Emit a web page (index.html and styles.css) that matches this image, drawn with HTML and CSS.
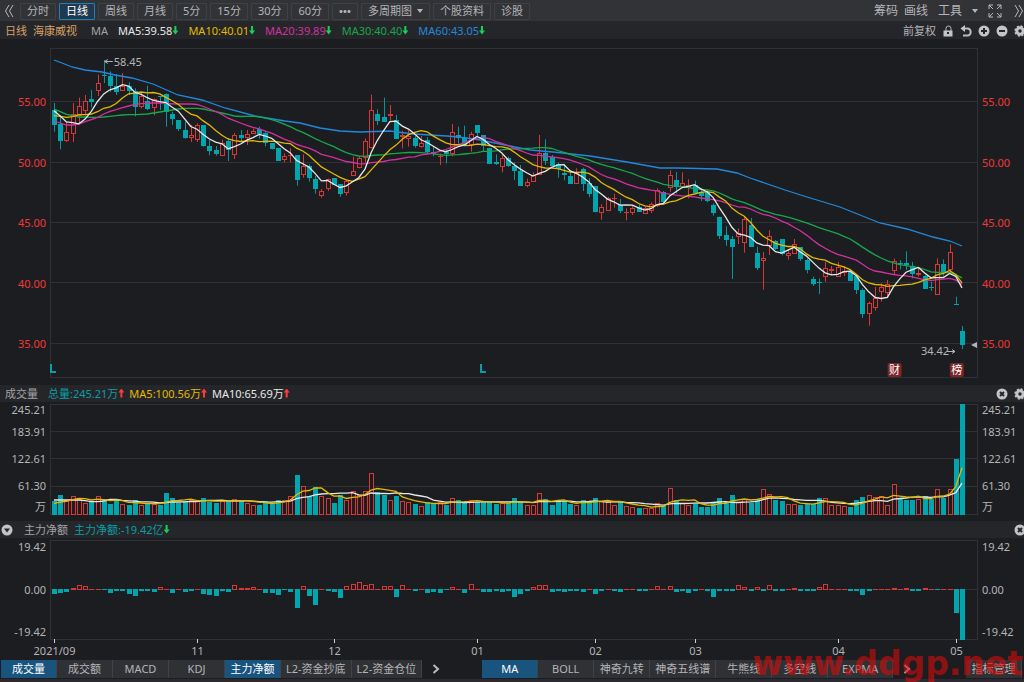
FILE: index.html
```html
<!DOCTYPE html>
<html lang="zh-CN">

<head>
    <meta charset="UTF-8">
    <meta name="viewport" content="width=device-width, initial-scale=1.0">
    <title>海康威视 日线</title>
    <link rel="stylesheet" href="styles.css">
</head>

<body>
    <div class="terminal">
        <header class="toolbar">
            <button class="plain" aria-label="收起">
                <svg width="10" height="14" viewBox="0 0 10 14"><path d="M5 1 1.500 7 5 13M9 1 5.500 7 9 13" /></svg>
            </button>
            <nav class="periods">
                <button>分时</button>
                <button class="active">日线</button>
                <button>周线</button>
                <button>月线</button>
                <button>5分</button>
                <button>15分</button>
                <button>30分</button>
                <button>60分</button>
                <button aria-label="更多周期"><i class="dots"></i></button>
                <button>多周期图<i class="caret"></i></button>
                <button>个股资料</button>
                <button>诊股</button>
            </nav>
            <div class="tools">
                <button class="plain">筹码</button>
                <button class="plain">画线</button>
                <button class="plain menu">工具<i class="caret"></i></button>
                <button class="plain full" aria-label="全屏">
                    <svg width="14" height="14" viewBox="0 0 14 14"><path d="M1 5V1H5M1 1 5 5M9 1H13V5M13 1 9 5M1 9V13H5M1 13 5 9M13 9V13H9M13 13 9 9" /></svg>
                </button>
                <button class="plain" aria-label="展开">
                    <svg width="10" height="14" viewBox="0 0 10 14"><path d="M1 1 4.500 7 1 13M5 1 8.500 7 5 13" /></svg>
                </button>
            </div>
        </header>

        <div class="bar info">
            <span class="stock">日线</span>
            <span class="stock name">海康威视</span>
            <span class="label">MA</span>
            <span class="white">MA5:39.58<i class="down"></i></span>
            <span class="yellow">MA10:40.01<i class="down"></i></span>
            <span class="pink">MA20:39.89<i class="down"></i></span>
            <span class="green">MA30:40.40<i class="down"></i></span>
            <span class="blue">MA60:43.05<i class="down"></i></span>
            <div class="bar-icons">
                <button class="plain">前复权</button>
                <button class="plain" aria-label="锁定">
                    <svg width="12" height="12" viewBox="0 0 12 12"><path d="M4 6V3.500a2.500 2.500 0 0 1 5 0V6" /><path class="solid" d="M1.500 5.500h9v6h-9z" /><path class="cut" d="M5 8h2" /></svg>
                </button>
                <button class="plain" aria-label="撤销">
                    <svg width="12" height="12" viewBox="0 0 12 12"><path class="thick" d="M2 3.500H7.500a3.200 3.500 0 0 1 0 7H3" /><path class="solid" d="M5 0V7L.5 3.500z" /></svg>
                </button>
                <button class="plain" aria-label="放大">
                    <svg width="12" height="12" viewBox="0 0 12 12"><circle class="solid" cx="6" cy="6" r="5.500" /><path class="cut" d="M3 6h6M6 3v6" /></svg>
                </button>
                <button class="plain" aria-label="缩小">
                    <svg width="12" height="12" viewBox="0 0 12 12"><circle class="solid" cx="6" cy="6" r="5.500" /><path class="cut" d="M3 6h6" /></svg>
                </button>
                <button class="plain" aria-label="设置">
                    <svg width="12" height="12" viewBox="0 0 12 12"><circle class="teeth" cx="6" cy="6" r="4.700" /><circle class="ring" cx="6" cy="6" r="3.200" /></svg>
                </button>
            </div>
        </div>

        <section class="panel price">
            <ul class="scale left">
                <li>55.00</li>
                <li>50.00</li>
                <li>45.00</li>
                <li>40.00</li>
                <li>35.00</li>
            </ul>
            <svg id="price" role="img" aria-label="K线图"></svg>
            <ul class="scale">
                <li>55.00</li>
                <li>50.00</li>
                <li>45.00</li>
                <li>40.00</li>
                <li>35.00</li>
            </ul>
        </section>

        <div class="bar volume-bar">
            <span class="label">成交量</span>
            <span class="teal">总量:245.21万<i class="up"></i></span>
            <span class="yellow">MA5:100.56万<i class="up"></i></span>
            <span class="white">MA10:65.69万<i class="up"></i></span>
            <div class="bar-icons">
                <button class="plain" aria-label="关闭成交量">
                    <svg width="12" height="12" viewBox="0 0 12 12"><circle class="solid" cx="6" cy="6" r="5.500" /><path class="cut" d="M4 4l4 4M8 4l-4 4" /></svg>
                </button>
                <button class="plain" aria-label="设置成交量">
                    <svg width="12" height="12" viewBox="0 0 12 12"><circle class="teeth" cx="6" cy="6" r="4.700" /><circle class="ring" cx="6" cy="6" r="3.200" /></svg>
                </button>
            </div>
        </div>

        <section class="panel volume">
            <ul class="scale left">
                <li>245.21</li>
                <li>183.91</li>
                <li>122.61</li>
                <li>61.30</li>
                <li>万</li>
            </ul>
            <svg id="volume" role="img" aria-label="成交量"></svg>
            <ul class="scale">
                <li>245.21</li>
                <li>183.91</li>
                <li>122.61</li>
                <li>61.30</li>
                <li>万</li>
            </ul>
        </section>

        <div class="bar flow-bar">
            <button class="plain" aria-label="切换指标">
                <svg width="12" height="12" viewBox="0 0 12 12"><circle class="solid" cx="6" cy="6" r="5.500" /><path class="hole" d="M3 4.500h6L6 8.500z" /></svg>
            </button>
            <span class="label">主力净额</span>
            <span class="teal">主力净额:-19.42亿<i class="down"></i></span>
            <div class="bar-icons">
                <button class="plain" aria-label="关闭主力净额">
                    <svg width="12" height="12" viewBox="0 0 12 12"><circle class="solid" cx="6" cy="6" r="5.500" /><path class="cut" d="M4 4l4 4M8 4l-4 4" /></svg>
                </button>
            </div>
        </div>

        <section class="panel flow">
            <ul class="scale left">
                <li>19.42</li>
                <li>0.00</li>
                <li>-19.42</li>
            </ul>
            <svg id="flow" role="img" aria-label="主力净额"></svg>
            <ul class="scale">
                <li>19.42</li>
                <li>0.00</li>
                <li>-19.42</li>
            </ul>
        </section>

        <footer class="tabs">
            <div class="group">
                <button class="active">成交量</button>
                <button>成交额</button>
                <button>MACD</button>
                <button>KDJ</button>
                <button class="active">主力净额</button>
                <button class="wide">L2-资金抄底</button>
                <button class="wide">L2-资金仓位</button>
            </div>
            <button class="plain more" aria-label="更多副图指标">
                <svg width="8" height="10" viewBox="0 0 8 10"><path class="thick" d="M1.500 1 6 5 1.500 9" /></svg>
            </button>
            <div class="group main">
                <button class="active">MA</button>
                <button>BOLL</button>
                <button>神奇九转</button>
                <button>神奇五线谱</button>
                <button>牛熊线</button>
                <button>多空线</button>
                <button class="expma">EXPMA</button>
            </div>
            <button class="plain more" aria-label="更多主图指标">
                <svg width="8" height="10" viewBox="0 0 8 10"><path class="thick" d="M1.500 1 6 5 1.500 9" /></svg>
            </button>
            <div class="group manage">
                <button>指标管理</button>
            </div>
        </footer>
        <div class="watermark">www.ddgp.net</div>
    </div>
    <script src="chart.js"></script>
</body>

</html>
```
FILE: styles.css
```css
* {
    box-sizing: border-box;
}

body {
    margin: 0;
    background: #1c1d20;
    color: #b4b5b8;
    font-family: "Noto Sans", "Noto Sans CJK SC", sans-serif;
    font-size: 11px;
    line-height: 16px;
}

button {
    font: inherit;
    color: inherit;
    padding: 0;
    border: 0;
    background: none;
    white-space: nowrap;
}

ul {
    list-style: none;
    margin: 0;
    padding: 0;
}

.terminal {
    position: relative;
    overflow: hidden;
}

.terminal::after {
    content: '';
    display: block;
    height: 4px;
    background: #2c2a30;
    border-top: 1px solid #1c1d20;
}

/* icons */
button svg {
    display: block;
    fill: none;
    stroke: #b9babd;
    stroke-width: 1;
}

button svg .solid {
    fill: #c3c4c7;
    stroke: none;
}

button svg .thick {
    stroke-width: 2;
}

button svg .cut {
    stroke: #25262a;
    stroke-width: 2;
}

button svg .hole {
    fill: #25262a;
    stroke: none;
}

button svg .ring {
    stroke: #c3c4c7;
    stroke-width: 3;
}

button svg .teeth {
    stroke: #c3c4c7;
    stroke-width: 2;
    stroke-dasharray: 2 1.690;
}

.caret {
    display: inline-block;
    border: 3px solid transparent;
    border-top: 4px solid #b4b5b8;
    border-bottom: 0;
    margin-left: 5px;
    vertical-align: 2px;
}

.dots {
    display: block;
    width: 12px;
    height: 3px;
    background: radial-gradient(circle at 50% 50%, #b4b5b8 1px, transparent 2px) 0 0 / 4px 3px;
}

/* top toolbar */
.toolbar {
    display: flex;
    align-items: center;
    height: 22px;
    padding: 1px 0 0 4px;
    background: #323337;
    border-bottom: 1px solid #27282b;
}

.periods {
    display: flex;
    gap: 3px;
    margin-left: 6px;
}

.periods button {
    display: flex;
    align-items: center;
    height: 17px;
    padding: 0 6px;
    border: 1px solid #404145;
    border-radius: 1px;
}

.periods .active {
    color: #fff;
    background: #1f3a50;
    border-color: #2280b8;
}

.tools {
    display: flex;
    align-items: center;
    gap: 6px;
    margin-left: auto;
    font-size: 12px;
}

.menu {
    margin-left: 4px;
}

.menu .caret {
    margin-left: 10px;
}

.full {
    margin: 0 6px 0 4px;
}

/* indicator bars */
.bar {
    display: flex;
    align-items: center;
    height: 17px;
    padding-left: 5px;
    background: #25262a;
    white-space: nowrap;
}

.info span {
    margin-right: 10px;
}

.info .stock {
    color: #d9a066;
    margin-right: 6px;
}

.info .name {
    margin-right: 14px;
}

.label {
    color: #a3a4a7;
}

.white {
    color: #e8e8e8;
}

.yellow {
    color: #e3ba00;
}

.pink {
    color: #d3309f;
}

.green {
    color: #17a84c;
}

.blue {
    color: #2189dd;
}

.teal {
    color: #0a9ea5;
}

.bar-icons {
    display: flex;
    align-items: center;
    gap: 6px;
    margin-left: auto;
    margin-right: -2px;
}

.up,
.down {
    display: inline-block;
    width: 6px;
    height: 9px;
    background: #19cf5b;
    clip-path: polygon(2px 0, 4px 0, 4px 5px, 6px 5px, 3px 9px, 0 5px, 2px 5px);
}

.up {
    background: #ff3a3a;
    clip-path: polygon(2px 9px, 4px 9px, 4px 4px, 6px 4px, 3px 0, 0 4px, 2px 4px);
}

.volume-bar span {
    margin-right: 5px;
}

.volume-bar .label {
    margin-right: 10px;
}

.flow-bar {
    gap: 6px;
    padding-left: 1px;
}

.flow-bar .label {
    margin-left: 5px;
}

/* charts */
.panel {
    display: grid;
    grid-template-columns: 50px minmax(0, 1fr) 46px;
    grid-template-rows: 100%;
}

.panel svg {
    display: block;
    width: 100%;
    height: 100%;
    overflow: visible;
}

.scale {
    padding-left: 4px;
}

.scale.left {
    text-align: right;
    padding-left: 0;
    padding-right: 4px;
}

.price {
    height: 346px;
    color: #f03838;
}

.price .scale {
    display: flex;
    flex-direction: column;
    justify-content: space-between;
    padding-top: 55px;
    padding-bottom: 33px;
}

.volume {
    height: 119px;
}

.volume .scale {
    line-height: 27px;
}

.volume .scale li:first-child,
.volume .scale li:last-child {
    line-height: 16px;
}

.flow {
    height: 121px;
}

.flow .scale {
    display: flex;
    flex-direction: column;
    justify-content: space-between;
    padding-top: 1px;
    padding-bottom: 19px;
}

.frame,
.grid {
    fill: none;
    stroke: #303134;
    shape-rendering: crispEdges;
}

.rise {
    fill: #1c1d20;
    stroke: #d93636;
    shape-rendering: crispEdges;
}

.fall {
    fill: #00a5ad;
    stroke: none;
    shape-rendering: crispEdges;
}

.wick-rise {
    stroke: #d93636;
}

.wick-fall {
    stroke: #08949b;
}

.event {
    fill: none;
    stroke: #08a0a8;
    stroke-width: 2;
}

.ma {
    fill: none;
    stroke-width: 1.300;
    stroke: currentColor;
}

.note {
    fill: #b4b5b8;
}

.arrow {
    fill: none;
    stroke: #b4b5b8;
}

.tick {
    stroke: #d0d0d0;
    shape-rendering: crispEdges;
}

.date {
    fill: #b4b5b8;
    text-anchor: middle;
}

.badge {
    fill: #7d2527;
}

.badge-text {
    fill: #fff;
    text-anchor: middle;
}

/* bottom tabs */
.tabs {
    display: flex;
    align-items: center;
    height: 19px;
    padding-left: 1px;
}

.group {
    display: flex;
}

.group button {
    min-width: 56px;
    height: 18px;
    padding: 0 5px;
    background: #303135;
    border-right: 1px solid #414246;
}

.group .wide {
    min-width: 70px;
}

.group .expma {
    min-width: 65px;
}

.group .active {
    color: #fff;
    background: #19547f;
}

.more {
    margin-left: 10px;
}

.main {
    margin-left: 42px;
}

.manage {
    margin-left: auto;
    margin-right: 2px;
}

.watermark {
    position: absolute;
    right: 1px;
    bottom: 1px;
    color: #d60b0b;
    opacity: 0.6;
    font: bold 33px/36px "DejaVu Sans", sans-serif;
    pointer-events: none;
}
```
FILE: chart.js
```js
const NS = "http://www.w3.org/2000/svg";

// r = rise, f = fall, then high, open/close box top, box bottom, low
// one step is a third of a pixel below the block's top
const candles = [
    {
        top: 6,
        bars: `f174,195,240,260 f215,238,288,313 r230,262,288,291 r174,208,266,291 r158,184,212,235
        r150,169,197,212 f135,163,171,187 r89,115,137,153 f45,91,94,114 f79,92,123,140 f87,122,140,150
        r84,122,137,137 f112,122,137,150 f130,137,187,214 r140,153,187,190 f122,169,192,195 r160,163,190,211
        f153,153,156,195 f145,148,200,245 f200,207,222,240 f225,225,252,258 f230,255,279,281 r240,270,278,291
        r235,240,284,291 f240,240,303,305 f285,303,318,331 f303,316,326,332 r284,295,332,332 f280,287,315,348
        r264,270,331,342 f255,269,279,290 r255,268,278,300 r251,257,266,266 f245,251,267,281 f258,263,294,304
        f294,294,313,313 f310,310,348,348`
    },
    {
        top: 46,
        bars: `r205,214,226,232 r190,210,214,232 f210,210,286,302 r208,243,269,278 f238,243,278,290
        f273,282,312,326 r312,319,332,338 r281,281,312,318 f280,280,299,299 f298,298,326,335 r285,289,323,332
        r215,257,272,272 r213,220,250,250 r160,169,220,232 r29,76,190,190 f73,88,107,120 f38,97,110,110
        r60,88,94,107 f90,105,161,161 r137,150,155,190 r135,153,163,185 f153,160,184,188 r153,174,185,188
        f156,165,201,206 f185,200,206,214 r206,212,215,240 f195,200,208,235 r117,140,208,214 f125,150,160,176
        f122,160,180,180 r140,148,180,200 f121,121,144,155 f151,151,184,200 f190,190,236,236 f208,231,238,240
        r210,220,245,262 f215,220,243,246`
    },
    {
        top: 86,
        bars: `f112,123,139,165 f120,138,182,182 r161,171,182,187 r142,150,170,170 r30,84,149,149
        f43,84,107,120 f90,95,123,123 f112,117,133,158 f118,145,149,166 f138,153,177,177 r130,144,176,176
        f128,131,177,198 f160,174,207,217 f184,184,262,262 r238,246,265,284 r216,219,257,257 r206,218,222,248
        f222,241,257,264 r250,260,263,286 r243,248,264,270 f238,246,260,260 r245,250,266,266 r232,238,259,264
        r190,196,244,246 f198,200,230,238 r136,151,190,200 f141,166,185,205 r142,175,185,185 r163,180,188,220
        f167,179,205,205 f190,200,213,228 f195,200,227,232 f235,241,264,272 f275,275,333,342 f304,331,345,363
        f333,342,366,462 r310,325,336,357`
    },
    {
        top: 151,
        bars: `r78,87,160,188 f84,104,171,171 f170,189,235,240 r186,205,213,299 r121,137,167,195
        f150,153,178,180 f147,147,192,196 r180,190,197,209 r147,163,191,191 f172,172,207,213 f205,210,240,250
        f260,267,282,288 f265,275,279,312 r216,234,261,275 r228,238,243,255 r216,231,261,261 r228,243,249,258
        f238,244,272,272 f252,259,300,312 f295,300,373,384 r335,339,373,407 r291,325,353,362 r280,291,306,335
        r270,281,308,320 r206,213,242,253 f210,219,223,238 f184,219,225,240 f216,229,252,265 r232,248,254,260
        f255,259,297,297 f275,290,295,303 r205,222,314,314 f208,222,250,257 r163,187,240,245 f320,341,344,344
        f408,423,466,477`
    }
];

// averages before the window has enough bars of its own
const seeds = {
    5: [197, 213, 231, 233],
    10: [212, 214, 217, 215, 209, 209, 207, 200, 190],
    20: [228, 234, 240, 240, 237, 230, 224, 217, 207, 199, 194, 188, 183, 178, 176, 175, 174, 174, 175],
    30: [192, 200, 208, 212, 216, 216, 217, 217, 216, 214, 212, 210, 209, 209, 208, 207, 204, 201, 198,
        195, 192, 190, 190, 190, 192, 196, 200, 204, 208]
};

// x, y pairs on a 928 wide plot
const ma60 = [4, 21, 12, 24, 22, 28, 35, 31, 52, 33, 65, 36, 82, 39, 103, 45, 128, 56, 152, 61, 175, 69,
    205, 77, 235, 82, 250, 84, 270, 89, 290, 92, 310, 93, 340, 92, 363, 95, 397, 97, 417, 99, 430, 101,
    460, 107, 480, 111, 503, 113, 540, 117, 577, 123, 610, 129, 627, 129, 667, 130, 687, 134, 700, 139,
    735, 151, 757, 158, 790, 168, 830, 184, 857, 190, 883, 198, 900, 202, 912, 207];

const volumes = [39, 56, 42, 55, 44, 32, 37, 55, 46, 30, 39, 31, 28, 41, 26, 30, 30, 28, 62, 49, 34, 38, 41,
    38, 49, 35, 32, 38, 40, 46, 43, 34, 28, 26, 38, 32, 43, 43, 53, 118, 85, 54, 80, 53, 49, 32, 56, 43, 69,
    56, 69, 122, 67, 56, 42, 53, 39, 37, 29, 25, 36, 32, 36, 26, 48, 41, 33, 43, 36, 35, 36, 29, 32, 33, 47,
    40, 26, 28, 64, 45, 27, 38, 39, 29, 26, 43, 36, 47, 40, 36, 28, 40, 24, 22, 19, 19, 18, 34, 25, 78, 43,
    33, 26, 31, 22, 20, 33, 49, 37, 56, 37, 46, 34, 46, 75, 61, 41, 38, 29, 29, 27, 31, 31, 49, 49, 26, 26,
    25, 20, 41, 52, 58, 52, 53, 26, 91, 46, 41, 43, 46, 54, 46, 75, 49, 75, 164, 331];

const flows = [-16, -11, -8, 6, 14, 12, 4, 1, -4, -13, -5, -7, -16, -20, -5, -5, -8, 9, 1, -13, 4, -10, -7,
    4, -14, -18, -20, -5, -10, 16, 6, 6, 9, 1, -12, -13, -19, -2, -10, -56, 12, -20, -47, 1, -7, -8, -26, 12,
    19, 25, 16, 19, 1, 12, 12, -23, 14, 1, -7, 3, -11, -8, -13, -2, 9, 1, -11, 18, 3, -10, -10, -5, -8, -5,
    -23, -14, -5, 9, 16, 14, -8, -5, -8, -5, -5, -8, 1, -14, -6, 1, -5, -8, 3, 3, -5, -5, 1, 12, 1, 12, -8,
    -6, -11, -6, 1, -5, -23, -7, -5, -5, 16, 9, -7, 9, -5, 16, -5, -7, 4, 6, -5, -7, -7, 9, 19, 1, 4, 1, -5,
    -5, -19, -7, 4, 4, 1, 6, 4, 6, -7, -7, 6, 1, -2, 4, 1, -71, -152];

const months = [[0, "2021/09"], [23, "11"], [45, "12"], [68, "01"], [87, "02"], [103, "03"], [126, "04"], [145, "05"]];

const bars = candles.flatMap(block => block.bars.trim().split(/\s+/).map(text => {
    const [high, top, bottom, low] = text.slice(1).split(",").map(v => block.top + v / 3);
    return { rise: text[0] === "r", high, top, bottom, low };
}));

function add(svg, tag, attrs, text) {
    const el = document.createElementNS(NS, tag);
    for (const key in attrs) el.setAttribute(key, attrs[key]);
    if (text) el.textContent = text;
    svg.appendChild(el);
}

function average(values, n, start = []) {
    return values.map((v, i) => {
        if (i < start.length) return start[i];
        const part = values.slice(Math.max(0, i - n + 1), i + 1);
        return part.reduce((a, b) => a + b, 0) / part.length;
    });
}

function line(svg, ys, x, color) {
    add(svg, "polyline", { class: "ma " + color, points: ys.map((y, i) => x(i) + "," + y.toFixed(1)).join(" ") });
}

function box(svg, rise, cx, top, bottom) {
    const left = Math.round(cx) - 2;
    top = Math.round(top);
    const height = Math.max(1, Math.round(bottom) - top);
    if (rise && height > 2) {
        add(svg, "rect", { class: "rise", x: left + 0.5, y: top + 0.5, width: 4, height: height - 1 });
    } else {
        add(svg, "rect", { class: "fall", x: left, y: top, width: 5, height, style: rise ? "fill:#d93636" : "" });
    }
}

function frame(svg, w, top, bottom, lines) {
    add(svg, "rect", { class: "frame", x: 0.5, y: top + 0.5, width: w - 1, height: bottom - top });
    lines.forEach(y => add(svg, "path", { class: "grid", d: `M0 ${y + 0.5}H${w}` }));
}

function drawPrice(svg, w, x) {
    frame(svg, w, 9, 338, [62, 123, 183, 243, 304]);
    bars.forEach((b, i) => {
        const cx = Math.round(x(i)) + 0.5;
        add(svg, "path", { class: b.rise ? "wick-rise" : "wick-fall", d: `M${cx} ${b.high}V${b.low}` });
        box(svg, b.rise, x(i), b.top, b.bottom);
    });
    const closes = bars.map(b => b.rise ? b.top : b.bottom);
    const seed = n => seeds[n].map(v => 6 + v / 3);
    const long = [];
    for (let i = 0; i < ma60.length; i += 2) long.push(ma60[i] * w / 928 + "," + ma60[i + 1]);
    add(svg, "polyline", { class: "ma blue", points: long.join(" ") });
    line(svg, average(closes, 30, seed(30)), x, "green");
    line(svg, average(closes, 20, seed(20)), x, "pink");
    line(svg, average(closes, 10, seed(10)), x, "yellow");
    line(svg, average(closes, 5, seed(5)), x, "white");

    const peak = x(8);
    add(svg, "path", { class: "arrow", d: `M${peak + 9} 22.500H${peak + 1}m3 -2l-3 2l3 2` });
    add(svg, "text", { class: "note", x: peak + 10, y: 27 }, "58.45");
    const last = x(146);
    add(svg, "text", { class: "note", x: last - 41, y: 316 }, "34.42");
    add(svg, "path", { class: "arrow", d: `M${last - 15} 312.500h8m-3 -2l3 2l-3 2` });
    add(svg, "path", { class: "note", d: `M${w - 7} 306l6 -3v6z` });

    [0, 430 * w / 928].forEach(ex => add(svg, "path", { class: "event", d: `M${ex + 1} 325v8h5` }));
    [[135, "财"], [145, "榜"]].forEach(([i, text]) => {
        add(svg, "rect", { class: "badge", x: x(i) - 6, y: 324, width: 14, height: 14, rx: 2 });
        add(svg, "text", { class: "badge-text", x: x(i) + 1, y: 335 }, text);
    });
}

function drawVolume(svg, w, x) {
    frame(svg, w, 2, 112, [29, 56, 84]);
    const y = v => 112 - v / 3;
    volumes.forEach((v, i) => box(svg, bars[i].rise, x(i), y(v), 113));
    line(svg, average(volumes, 10, [42, 42, 42, 42, 42, 40, 37, 37, 39]).map(y), x, "white");
    line(svg, average(volumes, 5, [32, 36, 38, 43]).map(y), x, "yellow");
}

function drawFlow(svg, w, x) {
    frame(svg, w, 2, 101, [51]);
    flows.forEach((v, i) => {
        const size = Math.max(1, Math.abs(v) / 3);
        box(svg, v > 0, x(i), v > 0 ? 52 - size : 51, v > 0 ? 52 : 51 + size);
    });
    months.forEach(([i, text]) => {
        const cx = Math.round(x(i)) + 0.5;
        add(svg, "path", { class: "tick", d: `M${cx} 101v4` });
        add(svg, "text", { class: "date", x: cx, y: 117 }, text);
    });
}

function draw() {
    const parts = { price: drawPrice, volume: drawVolume, flow: drawFlow };
    for (const id in parts) {
        const svg = document.getElementById(id);
        const w = svg.clientWidth || svg.getBoundingClientRect().width;
        svg.replaceChildren();
        parts[id](svg, w, i => 4 + i * (w - 20) / (bars.length - 1));
    }
}

window.addEventListener("resize", draw);
draw();
```
